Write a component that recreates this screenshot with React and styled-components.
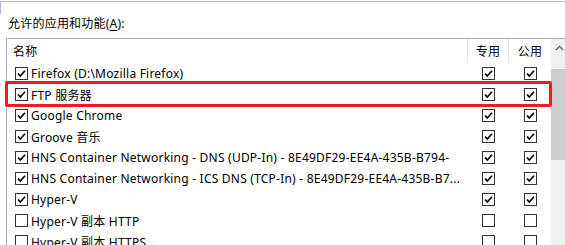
import styled, { createGlobalStyle } from "styled-components"

const rows = [
  { name: "Firefox (D:\\Mozilla Firefox)", on: true, priv: true, pub: true },
  { name: "FTP 服务器", on: true, priv: true, pub: true, marked: true },
  { name: "Google Chrome", on: true, priv: true, pub: true },
  { name: "Groove 音乐", on: true, priv: true, pub: true },
  {
    name: "HNS Container Networking - DNS (UDP-In) - 8E49DF29-EE4A-435B-B794-",
    on: true,
    priv: true,
    pub: true,
  },
  {
    name: "HNS Container Networking - ICS DNS (TCP-In) - 8E49DF29-EE4A-435B-B7...",
    on: true,
    priv: true,
    pub: true,
  },
  { name: "Hyper-V", on: true, priv: true, pub: true },
  { name: "Hyper-V 副本 HTTP", on: false, priv: false, pub: false },
  { name: "Hyper-V 副本 HTTPS", on: false, priv: false, pub: false },
]

const Check = ({ checked }) => (
  <Box>
    {checked && (
      <svg width="11" height="11" viewBox="0 0 11 11">
        <polyline
          points="2,5.5 4.3,8 9,2.8"
          fill="none"
          stroke="#000"
          strokeWidth="1.7"
        />
      </svg>
    )}
  </Box>
)

const App = () => {
  return (
    <>
      <GlobalStyle />
      <Page>
        <Frame />
        <Title>
          允许的应用和功能(<u>A</u>):
        </Title>
        <List>
          <Main>
            <HeaderRow>
              <HeadCell>名称</HeadCell>
              <HeadCell center>专用</HeadCell>
              <HeadCell center last>
                公用
              </HeadCell>
            </HeaderRow>
            {rows.map((r) => (
              <Row key={r.name}>
                <NameCell>
                  <Check checked={r.on} />
                  <Label>{r.name}</Label>
                </NameCell>
                <CheckCell>
                  <Check checked={r.priv} />
                </CheckCell>
                <CheckCell>
                  <Check checked={r.pub} />
                </CheckCell>
                {r.marked && <Highlight />}
              </Row>
            ))}
          </Main>
          <ScrollBar>
            <ArrowButton>
              <svg width="9" height="6" viewBox="0 0 9 6">
                <polyline
                  points="1,5 4.5,1.5 8,5"
                  fill="none"
                  stroke="#606060"
                  strokeWidth="1.3"
                />
              </svg>
            </ArrowButton>
            <Thumb />
          </ScrollBar>
        </List>
      </Page>
    </>
  )
}
export default App

//styling

const GlobalStyle = createGlobalStyle`
  body {
    margin: 0;
    background: #fff;
    overflow: hidden;
    font-family: "Noto Sans", "Noto Sans CJK SC", sans-serif;
    font-size: 12px;
    letter-spacing: 0.22px;
    color: #000;
  }
`

const Page = styled.div`
  width: 565px;
  height: 245px;
  overflow: hidden;
  padding-top: 1px;
  box-sizing: border-box;
`

const Frame = styled.div`
  height: 12px;
  border-top: 1px solid #b9b9e4;
  border-left: 1px solid #b9b9e4;
`

const Title = styled.div`
  height: 18px;
  line-height: 18px;
  padding-left: 8px;
  margin-top: 1px;
  white-space: nowrap;
  u {
    text-decoration-thickness: 1px;
    text-underline-offset: 2px;
  }
`

const List = styled.div`
  margin-top: 5px;
  margin-left: 6px;
  width: 570px;
  display: flex;
  border-top: 1px solid #adadd3;
  border-left: 1px solid #adadd3;
`

const Main = styled.div`
  width: 544px;
  flex: none;
`

const HeaderRow = styled.div`
  display: grid;
  grid-template-columns: 461px 41px 42px;
  height: 24px;
`

const HeadCell = styled.div`
  display: flex;
  align-items: center;
  justify-content: ${(p) => (p.center ? "center" : "flex-start")};
  padding-left: ${(p) => (p.center ? "0" : "6px")};
  border-right: ${(p) => (p.last ? "none" : "1px solid #e5e5e5")};
  color: #000;
`

const Row = styled.div`
  position: relative;
  display: grid;
  grid-template-columns: 461px 41px 42px;
  height: 21px;
`

const NameCell = styled.div`
  display: flex;
  align-items: center;
  gap: 3px;
  padding-left: 8px;
  padding-right: 4px;
  min-width: 0;
  overflow: hidden;
`

const Label = styled.span`
  white-space: nowrap;
`

const CheckCell = styled.div`
  display: flex;
  align-items: center;
  justify-content: center;
`

const Box = styled.div`
  flex: none;
  width: 13px;
  height: 13px;
  box-sizing: border-box;
  border: 1px solid #333;
  background: #fff;
  display: flex;
  align-items: center;
  justify-content: center;
`

const Highlight = styled.div`
  position: absolute;
  left: -2px;
  right: -1px;
  top: -3px;
  bottom: -2px;
  border: 3px solid #f01c1c;
  border-radius: 2px;
  pointer-events: none;
`

const ScrollBar = styled.div`
  width: 17px;
  flex: none;
  background: #f0f0f0;
  display: flex;
  flex-direction: column;
`

const ArrowButton = styled.div`
  height: 17px;
  display: flex;
  align-items: center;
  justify-content: center;
`

const Thumb = styled.div`
  margin-top: 13px;
  height: 91px;
  background: #cdcdcd;
`
